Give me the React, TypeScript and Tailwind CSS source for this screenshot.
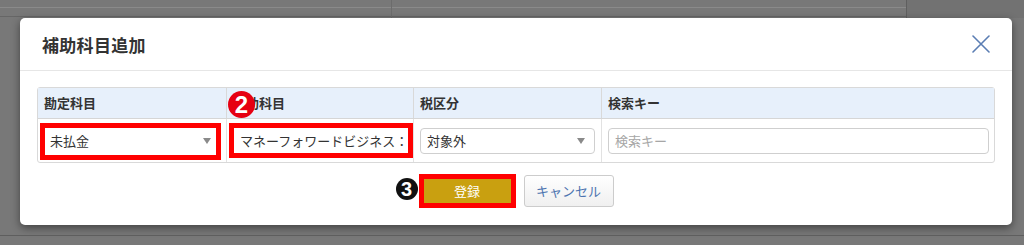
import React from 'react';

const font = { fontFamily: '"Noto Sans CJK JP", "Noto Sans", sans-serif' };
const badgeFont = { fontFamily: '"Liberation Sans", Arial, sans-serif' };

const Arrow = () => (
  <svg width="8" height="6" viewBox="0 0 8 6" className="shrink-0">
    <path d="M0 0 L8 0 L4 6 Z" fill="#8a8a8a" />
  </svg>
);

const CloseIcon = () => (
  <svg width="18" height="18" viewBox="0 0 18 18" className="shrink-0">
    <path d="M1 1 L17 17 M17 1 L1 17" stroke="#5a7db3" strokeWidth="1.6" strokeLinecap="round" />
  </svg>
);

export default function App() {
  return (
    <div className="w-[1024px] h-[245px] bg-[#787878] overflow-hidden flex flex-col" style={font}>
      {/* background rows behind the dialog */}
      <div className="h-[18px] flex shrink-0">
        <div className="w-[392px] border-r border-[#6c6c6c] flex flex-col">
          <div className="h-[8px] border-b border-[#8a8a8a]" />
          <div className="h-[9px] border-b border-[#666]" />
        </div>
        <div className="w-[515px] border-r border-[#5f5f5f] flex flex-col">
          <div className="h-[8px] border-b border-[#8a8a8a]" />
          <div className="h-[9px] border-b border-[#666]" />
        </div>
        <div className="flex-1 bg-[#727272]" />
      </div>

      <div className="flex">
        <div className="ml-[20px] w-[992px] h-[207px] bg-white rounded-[5px] shadow-[0_3px_8px_rgba(0,0,0,0.45)] flex flex-col">
          {/* header */}
          <div className="h-[53px] shrink-0 flex items-center justify-between pl-[22px] pr-[22px] border-b border-[#e6e6e6]">
            <h2 className="text-[17px] font-bold text-[#333] tracking-[0.3px] pt-[1px]">補助科目追加</h2>
            <CloseIcon />
          </div>

          {/* body */}
          <div className="px-[17px] pt-[16px]">
            <div className="border border-[#d9d9d9] rounded-[3px]">
              <div className="h-[31px] flex bg-[#e7f0fb] border-b border-[#d6d6d6] text-[13px] font-bold text-[#333]">
                <div className="w-[189px] flex items-center pl-[6px] border-r border-[#d9d9d9]">勘定科目</div>
                <div className="w-[187px] flex items-center pl-[6px] border-r border-[#d9d9d9] relative">
                  補助科目
                  <span
                    className="absolute left-[1px] top-[3px] w-[27px] h-[27px] rounded-full bg-[#e60012] text-white text-[24px] font-bold leading-none flex items-center justify-center"
                    style={badgeFont}
                  >
                    2
                  </span>
                </div>
                <div className="w-[188px] flex items-center pl-[6px] border-r border-[#d9d9d9]">税区分</div>
                <div className="flex-1 flex items-center pl-[6px]">検索キー</div>
              </div>

              <div className="h-[43px] flex text-[13px] text-[#333]">
                <div className="w-[189px] flex items-center pl-[2px] pr-[5px] border-r border-[#e2e2e2]">
                  <div className="w-full h-[37px] border-[5px] border-[#ff0000] bg-white flex items-center justify-between pl-[5px] pr-[5px] mt-[1px]">
                    <span>未払金</span>
                    <Arrow />
                  </div>
                </div>
                <div className="w-[187px] flex items-center pl-[2px] border-r border-[#e2e2e2]">
                  <div className="w-full h-[35px] border-[5px] border-[#ff0000] bg-white flex items-center pl-[6px] overflow-hidden whitespace-nowrap">
                    マネーフォワードビジネス：カード
                  </div>
                </div>
                <div className="w-[188px] flex items-center pl-[6px] pr-[6px] border-r border-[#e2e2e2]">
                  <div className="w-full h-[26px] border border-[#cfcfcf] rounded-[4px] flex items-center justify-between pl-[6px] pr-[9px]">
                    <span>対象外</span>
                    <Arrow />
                  </div>
                </div>
                <div className="flex-1 flex items-center pl-[6px] pr-[5px]">
                  <div className="w-full h-[26px] border border-[#cfcfcf] rounded-[4px] flex items-center pl-[6px] text-[#a6a6a6]">
                    検索キー
                  </div>
                </div>
              </div>
            </div>

            {/* footer buttons */}
            <div className="flex justify-center gap-[8px] mt-[11px]">
              <div className="relative">
                <span
                  className="absolute left-[-23px] top-[4px] w-[22px] h-[22px] rounded-full bg-[#111] text-white text-[20px] font-bold leading-none flex items-center justify-center"
                  style={badgeFont}
                >
                  3
                </span>
                <button className="w-[97px] h-[34px] border-[5px] border-[#ff0000] bg-[#c9a010] text-white text-[13px]">
                  登録
                </button>
              </div>
              <button className="w-[90px] h-[32px] mt-[1px] border border-[#cccccc] rounded-[3px] bg-gradient-to-b from-white to-[#f0f0f0] text-[#4d74b0] text-[13px]">
                キャンセル
              </button>
            </div>
          </div>
        </div>
      </div>

      <div className="flex-1 border-t border-[#5e5e5e] mt-[10px]" />
    </div>
  );
}
